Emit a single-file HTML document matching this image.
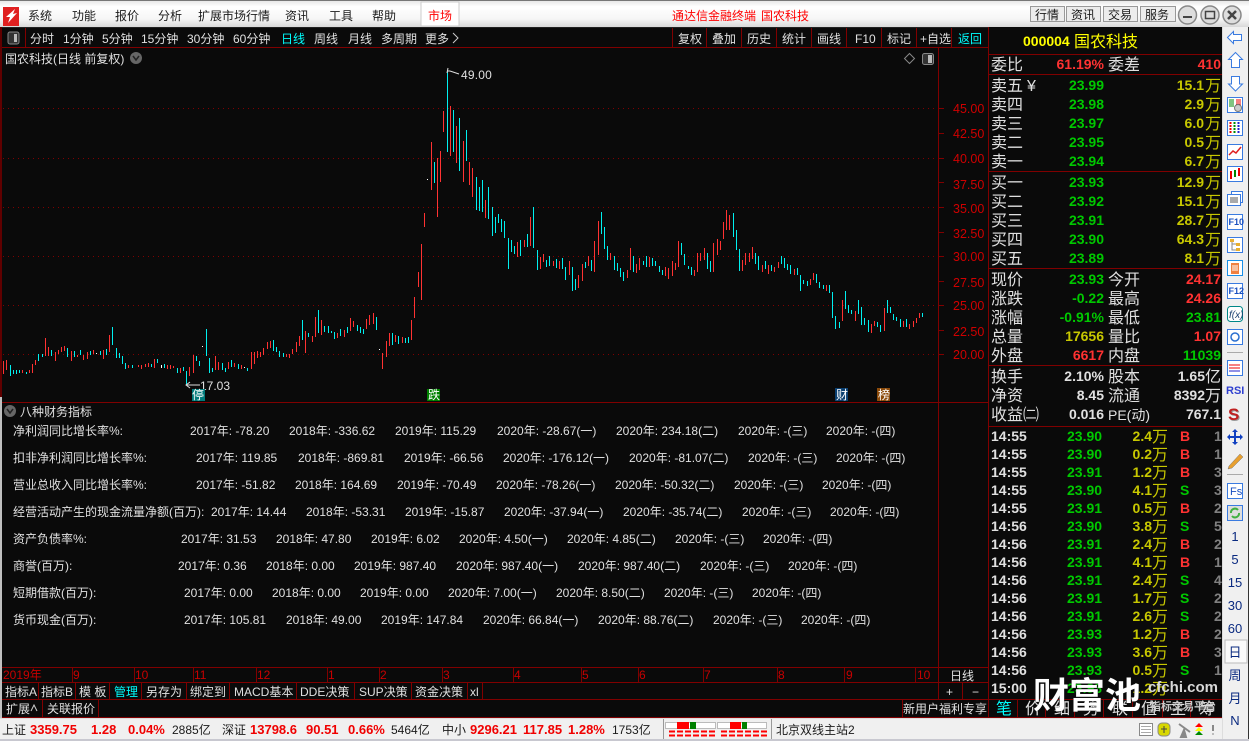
<!DOCTYPE html>
<html><head><meta charset="utf-8"><style>
html,body{margin:0;padding:0;background:#0a0a0a;overflow:hidden}
svg{display:block}
text{font-family:"Liberation Sans","WenQuanYi Zen Hei","Noto Sans CJK SC",sans-serif;font-size:12px;fill:#e0e0e0;white-space:pre}
.k{fill:#1a1a1a}.r{fill:#f00}.c{fill:#0ff}
.b{font-size:16px}.g{fill:#00c800}.y{fill:#c8c800}.e{text-anchor:end}.n{font-size:14px;font-weight:bold}
.rd{fill:#ff3232}.w{fill:#e0e0e0}.a{font-size:12.5px;fill:#d00000}.t{font-size:12px;fill:#c80000}
.s{font-size:13px;font-weight:bold;fill:#f00000}.nv{font-size:13px;fill:#0a2a80;text-anchor:middle}
.l{fill:#800000}
.ic{fill:#fff;stroke:#3a7be0}
.f{font-size:9px;fill:#1a50c0;font-weight:bold}
</style></head><body>
<svg width="1249" height="741" viewBox="0 0 1249 741" xmlns="http://www.w3.org/2000/svg">
<defs><linearGradient id="tb" x1="0" y1="0" x2="0" y2="1"><stop offset="0" stop-color="#e4e4e4"/><stop offset=".25" stop-color="#fff"/><stop offset=".7" stop-color="#f6f6f6"/><stop offset="1" stop-color="#d8d8d8"/></linearGradient></defs>
<rect width="1249" height="741" fill="#0a0a0a"/>
<rect width="1249" height="27" fill="url(#tb)"/>
<rect width="1249" height="1" fill="#777"/>
<rect x="0" y="27" width="2" height="370" fill="#600000"/><rect x="0" y="397" width="2" height="322" fill="#c0c0c0"/>
<g shape-rendering="crispEdges">
<rect x="3" y="7" width="16" height="19" fill="#e02020"/></g>
<path d="M6 17L15 9L13 14L17 13L8 23L10 17Z" fill="#fff"/>
<text x="28" y="20" class="k">系统</text><text x="72" y="20" class="k">功能</text><text x="115" y="20" class="k">报价</text><text x="158" y="20" class="k">分析</text><text x="198" y="20" class="k">扩展市场行情</text><text x="285" y="20" class="k">资讯</text><text x="329" y="20" class="k">工具</text><text x="372" y="20" class="k">帮助</text>
<rect x="421" y="2" width="38" height="24" fill="#fff" stroke="#ccc"/><text x="428" y="20" class="r">市场</text>
<text x="672" y="20" class="r">通达信金融终端</text><text x="761" y="20" class="r">国农科技</text>
<g fill="#ececec" stroke="#999"><rect x="1030.5" y="6.5" width="34" height="15"/><rect x="1066.5" y="6.5" width="34" height="15"/><rect x="1103.5" y="6.5" width="34" height="15"/><rect x="1140.5" y="6.5" width="35" height="15"/></g>
<text x="1035" y="19" class="k">行情</text><text x="1071" y="19" class="k">资讯</text><text x="1108" y="19" class="k">交易</text><text x="1145" y="19" class="k">服务</text>
<g fill="#ddd" stroke="#888" stroke-width="1.5"><circle cx="1187.5" cy="15" r="9"/><circle cx="1210" cy="15" r="9"/><circle cx="1232" cy="15" r="9"/></g>
<path d="M1183 17H1192" stroke="#444" stroke-width="2"/><rect x="1205.5" y="11.5" width="9" height="7" fill="none" stroke="#444" stroke-width="1.5"/><path d="M1228 11L1236 19M1236 11L1228 19" stroke="#444" stroke-width="2.5"/>

<!-- toolbar -->
<g shape-rendering="crispEdges" class="ll" fill="#800000">
<rect x="2" y="27" width="986" height="1" fill="#222"/>
<rect x="2" y="47" width="986" height="1"/>
<rect x="25" y="28" width="1" height="19"/><rect x="672" y="28" width="1" height="19"/><rect x="706" y="28" width="1" height="19"/><rect x="741" y="28" width="1" height="19"/><rect x="776" y="28" width="1" height="19"/><rect x="811" y="28" width="1" height="19"/><rect x="846" y="28" width="1" height="19"/><rect x="881" y="28" width="1" height="19"/><rect x="916" y="28" width="1" height="19"/><rect x="951" y="28" width="1" height="19"/>
<rect x="988" y="27" width="1" height="692"/>
<rect x="938" y="48" width="1" height="651"/>
<rect x="2" y="402" width="986" height="1"/>
<rect x="2" y="667" width="986" height="1"/><rect x="2" y="682" width="986" height="1"/><rect x="2" y="699" width="986" height="1"/><rect x="2" y="717" width="1220" height="1"/>
<rect x="988" y="54" width="234" height="1"/><rect x="988" y="74" width="234" height="1"/><rect x="988" y="171" width="234" height="1"/><rect x="988" y="268" width="234" height="1"/><rect x="988" y="365" width="234" height="1"/><rect x="988" y="426" width="234" height="1"/><rect x="988" y="699" width="234" height="1"/>
<rect x="1017" y="700" width="1" height="17"/><rect x="1045" y="700" width="1" height="17"/><rect x="1074" y="700" width="1" height="17"/><rect x="1103" y="700" width="1" height="17"/><rect x="1132" y="700" width="1" height="17"/><rect x="1162" y="700" width="1" height="17"/><rect x="1190" y="700" width="1" height="17"/>
<rect x="38" y="683" width="1" height="16"/><rect x="75" y="683" width="1" height="16"/><rect x="109" y="683" width="1" height="16"/><rect x="141" y="683" width="1" height="16"/><rect x="186" y="683" width="1" height="16"/><rect x="229" y="683" width="1" height="16"/><rect x="296" y="683" width="1" height="16"/><rect x="354" y="683" width="1" height="16"/><rect x="411" y="683" width="1" height="16"/><rect x="467" y="683" width="1" height="16"/><rect x="482" y="683" width="1" height="16"/><rect x="962" y="683" width="1" height="16"/>
<rect x="42" y="700" width="1" height="17"/><rect x="98" y="700" width="1" height="17"/><rect x="902" y="700" width="1" height="17"/>
<rect x="72" y="668" width="1" height="14"/><rect x="134" y="668" width="1" height="14"/><rect x="193" y="668" width="1" height="14"/><rect x="256" y="668" width="1" height="14"/><rect x="327" y="668" width="1" height="14"/><rect x="379" y="668" width="1" height="14"/><rect x="442" y="668" width="1" height="14"/><rect x="513" y="668" width="1" height="14"/><rect x="581" y="668" width="1" height="14"/><rect x="638" y="668" width="1" height="14"/><rect x="703" y="668" width="1" height="14"/><rect x="777" y="668" width="1" height="14"/><rect x="844" y="668" width="1" height="14"/><rect x="915" y="668" width="1" height="14"/>
</g>
<rect x="8" y="32" width="11" height="12" rx="2" fill="#333" stroke="#888"/><rect x="14" y="34" width="3" height="8" fill="#bbb"/>
<text x="30" y="43">分时</text><text x="63" y="43">1分钟</text><text x="102" y="43">5分钟</text><text x="141" y="43">15分钟</text><text x="187" y="43">30分钟</text><text x="233" y="43">60分钟</text><text x="281" y="43" class="c">日线</text><text x="314" y="43">周线</text><text x="348" y="43">月线</text><text x="381" y="43">多周期</text><text x="425" y="43">更多</text><path d="M453 33L458 38L453 43" fill="none" stroke="#ccc"/>
<text x="678" y="43">复权</text><text x="712" y="43">叠加</text><text x="747" y="43">历史</text><text x="782" y="43">统计</text><text x="817" y="43">画线</text><text x="855" y="43">F10</text><text x="887" y="43">标记</text><text x="920" y="43">+自选</text><text x="958" y="43" class="c">返回</text>

<text x="5" y="63">国农科技(日线 前复权)</text>
<circle cx="136" cy="58" r="6" fill="#666"/><path d="M133 56L136 60L139 56" fill="none" stroke="#222" stroke-width="1.5"/>
<path d="M909.5 53.5L914.5 58.5L909.5 63.5L904.5 58.5Z" fill="none" stroke="#888"/>
<rect x="922.5" y="53.5" width="11" height="11" rx="2" fill="#333" stroke="#888"/><rect x="928" y="55" width="4" height="8" fill="#bbb"/>

<!-- grid -->
<g stroke="#800000" stroke-dasharray="1 4" shape-rendering="crispEdges"><path d="M3 108.5H938M3 158.5H938M3 207.5H938M3 256.5H938M3 305.5H938M3 354.5H938"/></g>
<g stroke="#800000" shape-rendering="crispEdges"><path d="M938 108.5H944M938 133.5H944M938 158.5H944M938 182.5H944M938 207.5H944M938 232.5H944M938 256.5H944M938 281.5H944M938 305.5H944M938 330.5H944M938 354.5H944"/></g>
<g class="a"><text x="953" y="113" class="a">45.00</text><text x="953" y="138" class="a">42.50</text><text x="953" y="163" class="a">40.00</text><text x="953" y="189" class="a">37.50</text><text x="953" y="213" class="a">35.00</text><text x="953" y="238" class="a">32.50</text><text x="953" y="261" class="a">30.00</text><text x="953" y="287" class="a">27.50</text><text x="953" y="310" class="a">25.00</text><text x="953" y="336" class="a">22.50</text><text x="953" y="359" class="a">20.00</text></g>

<!-- candles -->
<g fill="none" stroke-width="1" shape-rendering="crispEdges" transform="translate(.5,0)">
<path stroke="#ff3232" d="M3 361V374M6 360V370M22 370V373M29 370V373M32 364V373M35 360V365M45 338V356M48 347V356M55 352V361M58 350V354M61 347V352M64 346V351M71 351V361M77 355V357M83 355V360M87 352V359M93 350V354M103 350V359M109 335V352M128 365V368M138 365V367M141 365V369M145 364V367M148 363V367M154 359V368M167 365V369M170 365V369M173 366V368M180 368V373M189 367V376M193 355V373M215 356V370M218 362V370M228 362V369M234 363V367M241 365V369M251 352V369M254 352V364M257 351V358M260 352V357M263 348V355M267 342V349M270 341V348M286 354V357M289 354V358M292 349V354M296 342V352M299 336V346M305 331V353M312 336V342M315 317V337M321 320V335M337 333V338M344 330V337M350 318V331M353 321V327M366 319V329M369 315V325M373 313V324M382 353V369M386 341V357M389 333V346M395 335V342M402 337V343M411 320V340M414 297V318M418 272V287M421 244V300M424 213V227M431 142V190M437 158V217M440 151V182M443 111V132M450 106V156M456 126V163M463 141V182M469 162V185M472 168V197M485 200V218M517 242V257M524 240V247M530 217V246M540 257V269M543 254V262M553 261V266M559 261V269M569 261V275M578 275V288M582 264V281M588 256V266M594 241V272M598 221V255M610 253V260M627 270V278M630 248V270M636 264V273M639 258V270M649 257V267M665 267V276M668 268V279M672 261V276M675 263V270M678 241V267M694 270V276M697 253V272M700 253V261M704 248V260M713 243V272M717 239V255M720 241V250M723 222V239M726 210V230M729 215V230M742 260V271M745 253V265M749 253V262M752 247V259M762 265V272M768 265V274M774 267V272M778 262V268M794 269V275M810 279V285M813 273V280M826 285V291M842 300V321M855 311V321M871 324V333M874 321V326M884 308V331M903 321V327M909 324V329M913 321V327M916 318V323M919 313V318"/>
<path stroke="#00f0f0" d="M10 365V376M13 370V374M16 370V374M19 370V373M26 372V374M38 354V361M42 354V357M51 350V356M67 348V357M74 351V357M80 350V355M90 351V355M100 351V355M106 349V355M112 327V345M116 348V358M119 353V358M122 356V364M125 363V369M132 365V368M151 364V367M157 359V363M164 364V368M177 368V373M183 367V371M186 371V385M196 356V361M199 361V366M206 329V356M209 358V373M212 368V372M222 363V370M225 368V372M231 360V367M238 364V369M247 368V371M273 340V351M276 347V352M279 351V357M283 353V357M302 320V340M308 333V337M318 310V333M324 326V332M328 326V333M331 331V333M334 332V339M340 329V336M347 327V333M357 325V331M360 327V333M363 329V334M376 317V330M392 333V345M398 336V344M405 338V343M408 337V343M434 162V183M447 70V152M453 110V152M459 118V171M466 130V161M476 177V210M479 187V211M482 180V212M488 187V219M492 207V236M495 217V233M498 214V223M501 219V232M504 221V238M508 238V269M511 240V252M514 246V254M520 240V256M527 234V247M533 207V248M537 250V270M546 260V267M549 256V266M556 259V268M562 258V269M565 267V280M572 267V291M575 279V290M585 262V268M591 260V271M601 212V234M604 227V249M607 246V260M614 256V270M617 263V271M620 268V277M623 272V281M633 256V272M643 261V265M646 256V267M652 258V266M655 261V266M659 266V272M662 270V275M681 243V255M684 254V265M688 266V269M691 267V275M707 253V269M710 261V272M733 213V237M736 230V250M739 249V271M755 253V264M758 256V270M765 261V269M771 265V271M781 256V264M784 258V268M787 264V270M790 265V274M797 268V275M800 275V291M803 280V284M807 281V286M816 274V283M819 282V288M823 285V289M829 285V293M832 292V318M835 316V329M839 322V328M845 291V309M848 305V313M851 310V314M858 300V314M861 307V325M864 318V325M868 320V332M877 322V327M880 325V332M887 300V313M890 307V313M893 314V320M896 317V321M900 319V327M906 319V327M922 313V317"/>
<path stroke="#fff" d="M96 353V354M161 365V368M244 367V368M202 346V347M379 349V350M427 179V180"/>
</g>
<path d="M447 71H450M448 68L447 73M450 71L459 74" fill="none" stroke="#ddd"/>
<text x="461" y="79" style="letter-spacing:.2px">49.00</text>
<path d="M186 385H200M190 382L186 385L190 388" fill="none" stroke="#ddd"/><text x="200" y="390">17.03</text>
<rect x="192" y="389" width="13" height="12" fill="#007b7b"/><text x="192" y="399" fill="#fff" style="fill:#fff">停</text>
<rect x="427" y="389" width="13" height="12" fill="#008000"/><text x="428" y="399" style="fill:#fff">跌</text>
<rect x="835" y="388" width="13" height="13" fill="#0a3f70"/><text x="836" y="399" style="fill:#fff">财</text>
<rect x="877" y="388" width="13" height="13" fill="#8b4a0a"/><text x="878" y="399" style="fill:#fff">榜</text>

<!-- finance -->
<circle cx="10" cy="411" r="6" fill="#666"/><path d="M7 409L10 413L13 409" fill="none" stroke="#222" stroke-width="1.5"/>
<text x="20" y="416">八种财务指标</text>
<g>
<text x="13" y="435">净利润同比增长率%:</text><text x="190" y="435">2017年: -78.20</text><text x="289" y="435">2018年: -336.62</text><text x="395" y="435">2019年: 115.29</text><text x="497" y="435">2020年: -28.67(一)</text><text x="616" y="435">2020年: 234.18(二)</text><text x="738" y="435">2020年: -(三)</text><text x="826" y="435">2020年: -(四)</text>
<text x="13" y="462">扣非净利润同比增长率%:</text><text x="196" y="462">2017年: 119.85</text><text x="298" y="462">2018年: -869.81</text><text x="404" y="462">2019年: -66.56</text><text x="503" y="462">2020年: -176.12(一)</text><text x="629" y="462">2020年: -81.07(二)</text><text x="748" y="462">2020年: -(三)</text><text x="836" y="462">2020年: -(四)</text>
<text x="13" y="489">营业总收入同比增长率%:</text><text x="196" y="489">2017年: -51.82</text><text x="295" y="489">2018年: 164.69</text><text x="397" y="489">2019年: -70.49</text><text x="496" y="489">2020年: -78.26(一)</text><text x="615" y="489">2020年: -50.32(二)</text><text x="734" y="489">2020年: -(三)</text><text x="822" y="489">2020年: -(四)</text>
<text x="13" y="516">经营活动产生的现金流量净额(百万):</text><text x="211" y="516">2017年: 14.44</text><text x="306" y="516">2018年: -53.31</text><text x="405" y="516">2019年: -15.87</text><text x="504" y="516">2020年: -37.94(一)</text><text x="623" y="516">2020年: -35.74(二)</text><text x="742" y="516">2020年: -(三)</text><text x="830" y="516">2020年: -(四)</text>
<text x="13" y="543">资产负债率%:</text><text x="181" y="543">2017年: 31.53</text><text x="276" y="543">2018年: 47.80</text><text x="371" y="543">2019年: 6.02</text><text x="459" y="543">2020年: 4.50(一)</text><text x="567" y="543">2020年: 4.85(二)</text><text x="675" y="543">2020年: -(三)</text><text x="763" y="543">2020年: -(四)</text>
<text x="13" y="570">商誉(百万):</text><text x="178" y="570">2017年: 0.36</text><text x="266" y="570">2018年: 0.00</text><text x="354" y="570">2019年: 987.40</text><text x="456" y="570">2020年: 987.40(一)</text><text x="578" y="570">2020年: 987.40(二)</text><text x="700" y="570">2020年: -(三)</text><text x="788" y="570">2020年: -(四)</text>
<text x="13" y="597">短期借款(百万):</text><text x="184" y="597">2017年: 0.00</text><text x="272" y="597">2018年: 0.00</text><text x="360" y="597">2019年: 0.00</text><text x="448" y="597">2020年: 7.00(一)</text><text x="556" y="597">2020年: 8.50(二)</text><text x="664" y="597">2020年: -(三)</text><text x="752" y="597">2020年: -(四)</text>
<text x="13" y="624">货币现金(百万):</text><text x="184" y="624">2017年: 105.81</text><text x="286" y="624">2018年: 49.00</text><text x="381" y="624">2019年: 147.84</text><text x="483" y="624">2020年: 66.84(一)</text><text x="598" y="624">2020年: 88.76(二)</text><text x="713" y="624">2020年: -(三)</text><text x="801" y="624">2020年: -(四)</text>
</g>

<!-- time axis -->
<g><text x="3" y="679" class="t">2019年</text><text x="73" y="679" class="t">9</text><text x="135" y="679" class="t">10</text><text x="194" y="679" class="t">11</text><text x="257" y="679" class="t">12</text><text x="328" y="679" class="t">1</text><text x="380" y="679" class="t">2</text><text x="443" y="679" class="t">3</text><text x="514" y="679" class="t">4</text><text x="582" y="679" class="t">5</text><text x="639" y="679" class="t">6</text><text x="704" y="679" class="t">7</text><text x="778" y="679" class="t">8</text><text x="846" y="679" class="t">9</text><text x="917" y="679" class="t">10</text></g>
<text x="950" y="680">日线</text>
<text x="5" y="696">指标A</text><text x="41" y="696">指标B</text><text x="79" y="696">模 板</text><text x="114" y="696" class="c">管理</text><text x="146" y="696">另存为</text><text x="190" y="696">绑定到</text><text x="234" y="696">MACD基本</text><text x="300" y="696">DDE决策</text><text x="359" y="696">SUP决策</text><text x="415" y="696">资金决策</text><text x="470" y="696">xl</text>
<text x="946" y="696">+</text><text x="972" y="696">−</text>
<text x="6" y="713">扩展</text><path d="M31 711L34 705L37 711" fill="none" stroke="#ccc"/><text x="47" y="713">关联报价</text><text x="903" y="713">新用户福利专享</text>

<!-- right panel -->
<text x="1023" y="46" class="n" style="fill:#ffff00">000004</text><text x="1074" y="47" class="b" style="fill:#ffff00">国农科技</text>
<text x="991" y="70" class="b">委比</text><text x="1104" y="69" class="n rd e">61.19%</text><text x="1108" y="70" class="b">委差</text><text x="1221" y="69" class="n rd e">410</text>
<g>
<text x="991" y="91" class="b">卖五</text><text x="1027" y="91" class="b">¥</text><text x="1104" y="90" class="n g e">23.99</text><text x="1204" y="90" class="n y e">15.1</text><text x="1205" y="91" class="b y">万</text>
<text x="991" y="110" class="b">卖四</text><text x="1104" y="109" class="n g e">23.98</text><text x="1204" y="109" class="n y e">2.9</text><text x="1205" y="110" class="b y">万</text>
<text x="991" y="129" class="b">卖三</text><text x="1104" y="128" class="n g e">23.97</text><text x="1204" y="128" class="n y e">6.0</text><text x="1205" y="129" class="b y">万</text>
<text x="991" y="148" class="b">卖二</text><text x="1104" y="147" class="n g e">23.95</text><text x="1204" y="147" class="n y e">0.5</text><text x="1205" y="148" class="b y">万</text>
<text x="991" y="167" class="b">卖一</text><text x="1104" y="166" class="n g e">23.94</text><text x="1204" y="166" class="n y e">6.7</text><text x="1205" y="167" class="b y">万</text>
<text x="991" y="188" class="b">买一</text><text x="1104" y="187" class="n g e">23.93</text><text x="1204" y="187" class="n y e">12.9</text><text x="1205" y="188" class="b y">万</text>
<text x="991" y="207" class="b">买二</text><text x="1104" y="206" class="n g e">23.92</text><text x="1204" y="206" class="n y e">15.1</text><text x="1205" y="207" class="b y">万</text>
<text x="991" y="226" class="b">买三</text><text x="1104" y="225" class="n g e">23.91</text><text x="1204" y="225" class="n y e">28.7</text><text x="1205" y="226" class="b y">万</text>
<text x="991" y="245" class="b">买四</text><text x="1104" y="244" class="n g e">23.90</text><text x="1204" y="244" class="n y e">64.3</text><text x="1205" y="245" class="b y">万</text>
<text x="991" y="264" class="b">买五</text><text x="1104" y="263" class="n g e">23.89</text><text x="1204" y="263" class="n y e">8.1</text><text x="1205" y="264" class="b y">万</text>
<text x="991" y="285" class="b">现价</text><text x="1104" y="284" class="n g e">23.93</text><text x="1108" y="285" class="b">今开</text><text x="1221" y="284" class="n rd e">24.17</text>
<text x="991" y="304" class="b">涨跌</text><text x="1104" y="303" class="n g e">-0.22</text><text x="1108" y="304" class="b">最高</text><text x="1221" y="303" class="n rd e">24.26</text>
<text x="991" y="323" class="b">涨幅</text><text x="1104" y="322" class="n g e">-0.91%</text><text x="1108" y="323" class="b">最低</text><text x="1221" y="322" class="n g e">23.81</text>
<text x="991" y="342" class="b">总量</text><text x="1104" y="341" class="n y e">17656</text><text x="1108" y="342" class="b">量比</text><text x="1221" y="341" class="n rd e">1.07</text>
<text x="991" y="361" class="b">外盘</text><text x="1104" y="360" class="n rd e">6617</text><text x="1108" y="361" class="b">内盘</text><text x="1221" y="360" class="n g e">11039</text>
<text x="991" y="382" class="b">换手</text><text x="1104" y="381" class="n w e">2.10%</text><text x="1108" y="382" class="b">股本</text><text x="1205" y="381" class="n w e">1.65</text><text x="1205" y="382" class="b">亿</text>
<text x="991" y="401" class="b">净资</text><text x="1104" y="400" class="n w e">8.45</text><text x="1108" y="401" class="b">流通</text><text x="1205" y="400" class="n w e">8392</text><text x="1205" y="401" class="b">万</text>
<text x="991" y="420" class="b">收益㈡</text><text x="1104" y="419" class="n w e">0.016</text><text x="1108" y="420" class="n w" style="font-weight:normal">PE(动)</text><text x="1221" y="419" class="n w e">767.1</text>
</g>
<!-- ticks -->
<g>
<text x="991" y="441" class="n w">14:55</text><text x="1067" y="441" class="n g">23.90</text><text x="1152" y="441" class="n y e">2.4</text><text x="1152" y="442" class="b y">万</text><text x="1180" y="441" class="n rd">B</text><text x="1214" y="441" class="n" style="fill:#808080">1</text>
<text x="991" y="459" class="n w">14:55</text><text x="1067" y="459" class="n g">23.90</text><text x="1152" y="459" class="n y e">0.2</text><text x="1152" y="460" class="b y">万</text><text x="1180" y="459" class="n rd">B</text><text x="1214" y="459" class="n" style="fill:#808080">1</text>
<text x="991" y="477" class="n w">14:55</text><text x="1067" y="477" class="n g">23.91</text><text x="1152" y="477" class="n y e">1.2</text><text x="1152" y="478" class="b y">万</text><text x="1180" y="477" class="n rd">B</text><text x="1214" y="477" class="n" style="fill:#808080">3</text>
<text x="991" y="495" class="n w">14:55</text><text x="1067" y="495" class="n g">23.90</text><text x="1152" y="495" class="n y e">4.1</text><text x="1152" y="496" class="b y">万</text><text x="1180" y="495" class="n g">S</text><text x="1214" y="495" class="n" style="fill:#808080">3</text>
<text x="991" y="513" class="n w">14:55</text><text x="1067" y="513" class="n g">23.91</text><text x="1152" y="513" class="n y e">0.5</text><text x="1152" y="514" class="b y">万</text><text x="1180" y="513" class="n rd">B</text><text x="1214" y="513" class="n" style="fill:#808080">2</text>
<text x="991" y="531" class="n w">14:56</text><text x="1067" y="531" class="n g">23.90</text><text x="1152" y="531" class="n y e">3.8</text><text x="1152" y="532" class="b y">万</text><text x="1180" y="531" class="n g">S</text><text x="1214" y="531" class="n" style="fill:#808080">5</text>
<text x="991" y="549" class="n w">14:56</text><text x="1067" y="549" class="n g">23.91</text><text x="1152" y="549" class="n y e">2.4</text><text x="1152" y="550" class="b y">万</text><text x="1180" y="549" class="n rd">B</text><text x="1214" y="549" class="n" style="fill:#808080">2</text>
<text x="991" y="567" class="n w">14:56</text><text x="1067" y="567" class="n g">23.91</text><text x="1152" y="567" class="n y e">4.1</text><text x="1152" y="568" class="b y">万</text><text x="1180" y="567" class="n rd">B</text><text x="1214" y="567" class="n" style="fill:#808080">1</text>
<text x="991" y="585" class="n w">14:56</text><text x="1067" y="585" class="n g">23.91</text><text x="1152" y="585" class="n y e">2.4</text><text x="1152" y="586" class="b y">万</text><text x="1180" y="585" class="n g">S</text><text x="1214" y="585" class="n" style="fill:#808080">4</text>
<text x="991" y="603" class="n w">14:56</text><text x="1067" y="603" class="n g">23.91</text><text x="1152" y="603" class="n y e">1.7</text><text x="1152" y="604" class="b y">万</text><text x="1180" y="603" class="n g">S</text><text x="1214" y="603" class="n" style="fill:#808080">2</text>
<text x="991" y="621" class="n w">14:56</text><text x="1067" y="621" class="n g">23.91</text><text x="1152" y="621" class="n y e">2.6</text><text x="1152" y="622" class="b y">万</text><text x="1180" y="621" class="n g">S</text><text x="1214" y="621" class="n" style="fill:#808080">2</text>
<text x="991" y="639" class="n w">14:56</text><text x="1067" y="639" class="n g">23.93</text><text x="1152" y="639" class="n y e">1.2</text><text x="1152" y="640" class="b y">万</text><text x="1180" y="639" class="n rd">B</text><text x="1214" y="639" class="n" style="fill:#808080">2</text>
<text x="991" y="657" class="n w">14:56</text><text x="1067" y="657" class="n g">23.93</text><text x="1152" y="657" class="n y e">3.6</text><text x="1152" y="658" class="b y">万</text><text x="1180" y="657" class="n rd">B</text><text x="1214" y="657" class="n" style="fill:#808080">3</text>
<text x="991" y="675" class="n w">14:56</text><text x="1067" y="675" class="n g">23.93</text><text x="1152" y="675" class="n y e">0.5</text><text x="1152" y="676" class="b y">万</text><text x="1180" y="675" class="n g">S</text><text x="1214" y="675" class="n" style="fill:#808080">1</text>
<text x="991" y="693" class="n w">15:00</text><text x="1067" y="693" class="n g">23.93</text><text x="1152" y="693" class="n y e">1.2</text><text x="1152" y="694" class="b y">万</text>
</g>
<text x="996" y="714" class="b c">笔</text><text x="1025" y="714" class="b">价</text><text x="1054" y="714" class="b">细</text><text x="1083" y="714" class="b">势</text><text x="1112" y="714" class="b">联</text><text x="1141" y="714" class="b">值</text><text x="1170" y="714" class="b">主</text><text x="1199" y="714" class="b">筹</text>

<!-- watermark -->
<text x="1033" y="708" style="font-family:'Noto Sans CJK SC',sans-serif;font-size:36px;font-weight:bold;fill:#fff;stroke:#222;stroke-width:.5px;paint-order:stroke">财富池</text>
<text x="1148" y="692" style="font-size:15px;font-weight:bold;fill:#d8d8d8">cfchi.com</text>
<text x="1150" y="710" style="font-size:11px;font-weight:bold;fill:#c8c8c8;font-family:'Noto Sans CJK SC',sans-serif">指标交易平台</text>

<!-- status bar -->
<rect x="0" y="718" width="1223" height="21" fill="#f0f0f0"/>
<rect x="0" y="718" width="1223" height="1" fill="#ddd"/>
<text x="2" y="734" class="k">上证</text><text x="30" y="734" class="s">3359.75</text><text x="91" y="734" class="s">1.28</text><text x="128" y="734" class="s">0.04%</text><text x="172" y="734" class="k">2885亿</text>
<text x="222" y="734" class="k">深证</text><text x="250" y="734" class="s">13798.6</text><text x="306" y="734" class="s">90.51</text><text x="348" y="734" class="s">0.66%</text><text x="391" y="734" class="k">5464亿</text>
<text x="442" y="734" class="k">中小</text><text x="470" y="734" class="s">9296.21</text><text x="523" y="734" class="s">117.85</text><text x="568" y="734" class="s">1.28%</text><text x="612" y="734" class="k">1753亿</text>
<g shape-rendering="crispEdges">
<rect x="663" y="719" width="1" height="20" fill="#999"/><rect x="771" y="719" width="1" height="20" fill="#999"/>
<rect x="665.5" y="722.5" width="50" height="6" fill="#fff" stroke="#bbb"/><rect x="717.5" y="722.5" width="49" height="6" fill="#fff" stroke="#bbb"/>
<rect x="677" y="722" width="12" height="7" fill="#f00"/><rect x="690" y="722" width="6" height="7" fill="#008000"/><rect x="730" y="722" width="11" height="7" fill="#f00"/><rect x="742" y="722" width="5" height="7" fill="#008000"/>
<path d="M669 731.5h46M669 735.5h46M721 731.5h46M721 735.5h46" stroke="#f00" stroke-width="2" stroke-dasharray="6 2"/>
</g>
<text x="776" y="734" class="k">北京双线主站2</text>
<rect x="1139.5" y="723.5" width="13" height="12" fill="#fff" stroke="#888"/><path d="M1141 726.5h10M1141 729.5h10M1141 732.5h10" stroke="#aaa"/>
<rect x="1158" y="723" width="12" height="13" rx="4" fill="#d8d800" stroke="#888"/><path d="M1164 726V733M1161 729H1167" stroke="#444"/>
<path d="M1179 724L1190 732M1184 730L1186 737H1181Z" stroke="#888" stroke-width="2" fill="#888"/>
<path d="M1199 723L1203 727H1195Z" fill="#f00"/><path d="M1199 727L1203 731H1195Z" fill="#ff0"/><path d="M1199 731L1203 735H1195Z" fill="#080"/>
<path d="M1213 725V731" stroke="#888" stroke-width="2"/><path d="M1213 733V735" stroke="#888"/>

<!-- sidebar -->
<rect x="1222" y="27" width="27" height="712" fill="#f0f0f0"/>
<rect x="1222" y="27" width="1" height="712" fill="#ddd"/><rect x="1248" y="27" width="1" height="712" fill="#333"/>
<rect x="0" y="739" width="1249" height="2" fill="#c8c8d0"/>
<path class="ic" d="M1227.5 37.5L1233.5 31.5V34.5H1241.5V40.5H1233.5V43.5Z"/>
<path class="ic" d="M1235.5 52.5L1242.5 59.5H1239.5V67.5H1231.5V59.5H1228.5Z"/>
<path class="ic" d="M1235.5 91L1242.5 84H1239.5V76.5H1231.5V84H1228.5Z"/>
<g shape-rendering="crispEdges">
<rect class="ic" x="1227.5" y="97.5" width="15" height="15"/><path d="M1229 100h5M1229 102h5M1229 104h5M1229 106h5" stroke="#080"/><path d="M1236 100h5M1236 102h5M1236 104h5" stroke="#e00"/>
<rect class="ic" x="1227.5" y="120.5" width="15" height="15"/><g stroke-dasharray="2 1"><path d="M1230 122v12M1231 122v12" stroke="#e00"/><path d="M1234 122v12M1235 122v12" stroke="#080"/><path d="M1238 122v12M1239 122v12" stroke="#22c"/></g>
<rect class="ic" x="1227.5" y="144.5" width="15" height="15"/>
<rect class="ic" x="1227.5" y="166.5" width="15" height="15"/><path d="M1231 171v8M1239 168v8" stroke="#e00" stroke-width="2"/><path d="M1235 170v7" stroke="#080" stroke-width="2"/>
<rect class="ic" x="1231.5" y="191.5" width="11" height="11"/><rect class="ic" x="1227.5" y="194.5" width="13" height="11"/><path d="M1230 198h8M1230 200h8M1230 202h8" stroke="#555"/>
<rect class="ic" x="1227.5" y="214.5" width="15" height="15"/>
<rect class="ic" x="1227.5" y="237.5" width="15" height="15"/><rect x="1230" y="239" width="4" height="3" fill="#e8b030"/><rect x="1236" y="243" width="4" height="3" fill="#e8b030"/><rect x="1236" y="248" width="4" height="3" fill="#e8b030"/><path d="M1232 242v8h4M1232 244h4" fill="none" stroke="#888"/>
<rect class="ic" style="stroke:#1a90e8" x="1227.5" y="260.5" width="15" height="15"/><rect x="1231" y="263" width="8" height="11" fill="#f08040"/><path d="M1232 266h6M1232 268h6M1232 270h6" stroke="#fff"/>
<rect class="ic" x="1227.5" y="283.5" width="15" height="15"/>
<rect class="ic" x="1227.5" y="329.5" width="15" height="15"/>
<rect x="1227" y="352" width="16" height="1" fill="#aaa"/>
<rect class="ic" x="1227.5" y="360.5" width="15" height="15"/><path d="M1229 365h11M1229 368h11" stroke="#e00"/><path d="M1229 371h11" stroke="#22c"/>
<rect x="1227" y="474" width="16" height="1" fill="#aaa"/>
<rect class="ic" x="1227.5" y="483.5" width="15" height="15"/>
<rect class="ic" style="fill:#ddd" x="1227.5" y="505.5" width="15" height="15"/>
<rect x="1225" y="640" width="22" height="23" fill="#fafafa" stroke="#bbb"/>
</g>
<path d="M1229 155L1233 151L1236 153L1241 147" fill="none" stroke="#e02020" stroke-width="1.5"/>
<circle cx="1238" cy="108" r="3.5" fill="#ccc" stroke="#777"/>
<rect class="ic" style="stroke:#088" x="1227.5" y="306.5" width="15" height="15" rx="3"/>
<circle cx="1235" cy="337" r="4" fill="none" stroke="#2a6fd0" stroke-width="1.5"/>
<text x="1228.5" y="225" class="f">F10</text><text x="1228.5" y="294" class="f">F12</text><text x="1229" y="318" style="font-size:10px;font-style:italic;fill:#1a4070">f(x)</text><text x="1230" y="495" style="font-size:11px;fill:#1a50c0">Fs</text>
<text x="1226" y="394" style="font-size:11px;font-weight:bold;fill:#3040d0">RSI</text>
<text x="1229" y="421" style="font-size:17px;font-weight:bold;fill:#999">S</text><text x="1228" y="420" style="font-size:17px;font-weight:bold;fill:#c02020">S</text>
<path d="M1235 429L1238 432H1236V436H1240V434L1243 437L1240 440V438H1236V442H1238L1235 445L1232 442H1234V438H1230V440L1227 437L1230 434V436H1234V432H1232Z" fill="#1040c0"/>
<path d="M1229 466L1240 454L1243 457L1232 468L1228 469Z" fill="#e8a030" stroke="#777" stroke-width=".5"/>
<path d="M1231 513A4 4 0 0 1 1238 510M1239 513A4 4 0 0 1 1232 516" fill="none" stroke="#40b040" stroke-width="2"/>
<text x="1235" y="541" class="nv">1</text><text x="1235" y="564" class="nv">5</text><text x="1235" y="587" class="nv">15</text><text x="1235" y="610" class="nv">30</text><text x="1235" y="633" class="nv">60</text><text x="1235" y="657" class="nv">日</text><text x="1235" y="680" class="nv">周</text><text x="1235" y="703" class="nv">月</text><text x="1235" y="725" class="nv">N</text>
</svg>
</body></html>
